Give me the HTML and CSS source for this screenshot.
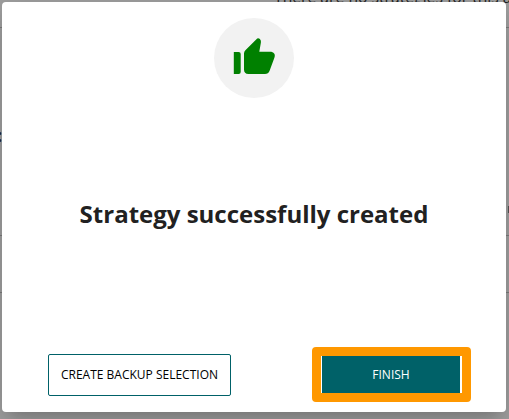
FILE: index.html
```html
<!DOCTYPE html>
<html lang="en">
<head>
<meta charset="utf-8">
<title>Strategy</title>
<link rel="stylesheet" href="styles.css">
</head>
<body>
<div class="backdrop" aria-hidden="true">
  <p class="empty-note">There are no strategies for this a</p>
  <span class="rule rule-top"></span>
  <span class="rule rule-middle"></span>
  <span class="rule rule-bottom"></span>
  <span class="colon">:</span>
  <span class="edge-mark"></span>
</div>
<main class="dialog">
  <div class="badge">
    <svg viewBox="0 0 80 80" width="80" height="80" fill="#008000">
      <path d="M19.8 34H24.7Q26.7 34 26.7 36V54Q26.7 56 24.7 56H19.8Z"/>
      <path d="M43.2 20.6Q44.4 19.6 45.6 20.8L46.2 21.6Q47.2 22.8 46.9 24.4L45.3 33.8H56C59.8 33.8 61.8 36.2 60.4 39.8L55.6 52.8Q54.3 56 51 56H34.4Q30 56 30 51.6V35.6Q30 33.6 31.4 32.2Z"/>
    </svg>
  </div>
  <h1 class="title">Strategy successfully created</h1>
  <div class="actions">
    <button class="button secondary">CREATE BACKUP SELECTION</button>
    <div class="highlight"><button class="button primary">FINISH</button></div>
  </div>
</main>
</body>
</html>
```
FILE: styles.css
```css
* { box-sizing: border-box; }
body {
  position: relative;
  width: 509px;
  height: 419px;
  margin: 0;
  overflow: hidden;
  background: #a0a0a0;
  font-family: "Open Sans", "Noto Sans", sans-serif;
}
.backdrop { position: absolute; inset: 0; color: #222; }
.empty-note {
  position: absolute;
  top: -13px;
  left: 274px;
  margin: 0;
  font-size: 15.7px;
  line-height: 20px;
  white-space: nowrap;
}
.rule { position: absolute; left: 0; width: 100%; height: 1px; background: #7c7c7c; }
.rule-top { top: 27px; }
.rule-middle { top: 235px; }
.rule-bottom { top: 292px; }
.colon { position: absolute; top: 123px; left: -3px; font-size: 18px; font-weight: 700; line-height: 24px; }
.edge-mark { position: absolute; top: 206px; right: 0; width: 1px; height: 7px; background: #555; }
.dialog {
  position: relative;
  display: flex;
  flex-direction: column;
  align-items: center;
  width: 504px;
  height: 410px;
  margin: 2px;
  padding: 16px 35px 10px 46px;
  border-radius: 4px;
  background: #fff;
  box-shadow: 0 11px 15px -7px rgba(0,0,0,.2), 0 9px 46px 8px rgba(0,0,0,.12);
}
.badge {
  width: 80px;
  height: 80px;
  margin-right: 11px;
  border-radius: 50%;
  background: #f2f2f2;
}
.badge svg { display: block; }
.title {
  margin: 98px 11px 0 0;
  color: #212121;
  font-size: 24px;
  font-weight: 700;
  line-height: 36px;
  white-space: nowrap;
}
.actions {
  display: flex;
  align-items: center;
  justify-content: space-between;
  width: 100%;
  margin-top: auto;
}
.button {
  padding: 0;
  border: 1px solid #006168;
  border-radius: 2px;
  font: 400 12px/18px "Open Sans", "Noto Sans", sans-serif;
  white-space: nowrap;
}
.secondary { width: 183px; height: 42px; background: #fff; color: #000; }
.highlight {
  width: 159px;
  height: 55px;
  border: 9px solid #ff9800;
  border-radius: 4px;
  background: #fff;
  padding: 0 2px 0 1px;
}
.primary { display: block; width: 138px; height: 37px; border-radius: 0; background: #006168; color: #fff; }
```
